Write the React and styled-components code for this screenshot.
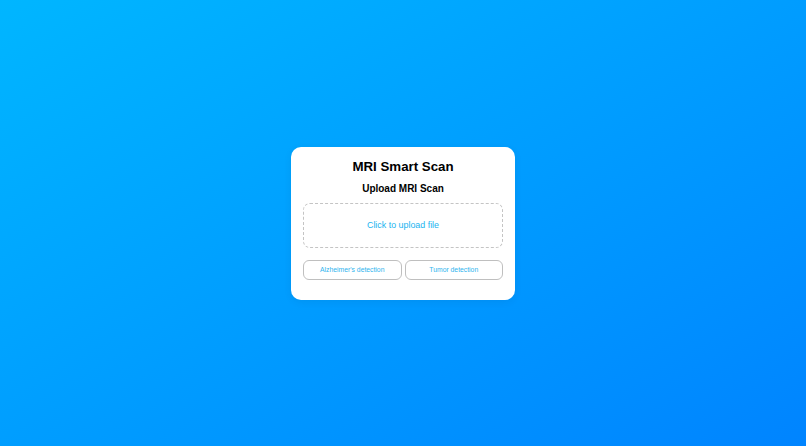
import React from "react";
import styled, { createGlobalStyle } from "styled-components";

const GlobalStyle = createGlobalStyle`
  html, body {
    margin: 0;
    padding: 0;
    height: 100%;
  }
  #root {
    height: 100%;
  }
  * {
    box-sizing: border-box;
  }
`;

const Page = styled.div`
  width: 100%;
  height: 100vh;
  display: flex;
  align-items: center;
  justify-content: center;
  background: linear-gradient(150deg, #00b6ff 0%, #0084ff 100%);
  font-family: "Liberation Sans", Arial, sans-serif;
`;

const Card = styled.div`
  width: 224px;
  background: #ffffff;
  border-radius: 10px;
  padding: 12px 12px 20px;
  display: flex;
  flex-direction: column;
  box-shadow: 0 2px 8px rgba(0, 0, 0, 0.06);
`;

const Title = styled.h1`
  margin: 0;
  font-size: 13.3px;
  line-height: 16px;
  font-weight: 700;
  text-align: center;
  color: #000;
`;

const SubTitle = styled.h2`
  margin: 8px 0 0;
  font-size: 10px;
  line-height: 12px;
  font-weight: 700;
  text-align: center;
  color: #000;
`;

const UploadBox = styled.label`
  margin-top: 8px;
  height: 45px;
  border: 1px dashed #c4c4c4;
  border-radius: 7px;
  display: flex;
  align-items: center;
  justify-content: center;
  font-size: 8.9px;
  color: #1ab4f0;
  cursor: pointer;
`;

const HiddenInput = styled.input`
  display: none;
`;

const Buttons = styled.div`
  margin-top: 12px;
  display: grid;
  grid-template-columns: 1fr 1fr;
  gap: 3px;
`;

const ModeButton = styled.button`
  height: 20px;
  background: #fff;
  border: 1px solid #bfbfbf;
  border-radius: 6px;
  font-family: inherit;
  font-size: 6.8px;
  color: #2fb4ee;
  cursor: pointer;
  padding: 0;
`;

export default function App() {
  return (
    <>
      <GlobalStyle />
      <Page>
        <Card>
          <Title>MRI Smart Scan</Title>
          <SubTitle>Upload MRI Scan</SubTitle>
          <UploadBox>
            Click to upload file
            <HiddenInput type="file" />
          </UploadBox>
          <Buttons>
            <ModeButton>Alzheimer's detection</ModeButton>
            <ModeButton>Tumor detection</ModeButton>
          </Buttons>
        </Card>
      </Page>
    </>
  );
}
